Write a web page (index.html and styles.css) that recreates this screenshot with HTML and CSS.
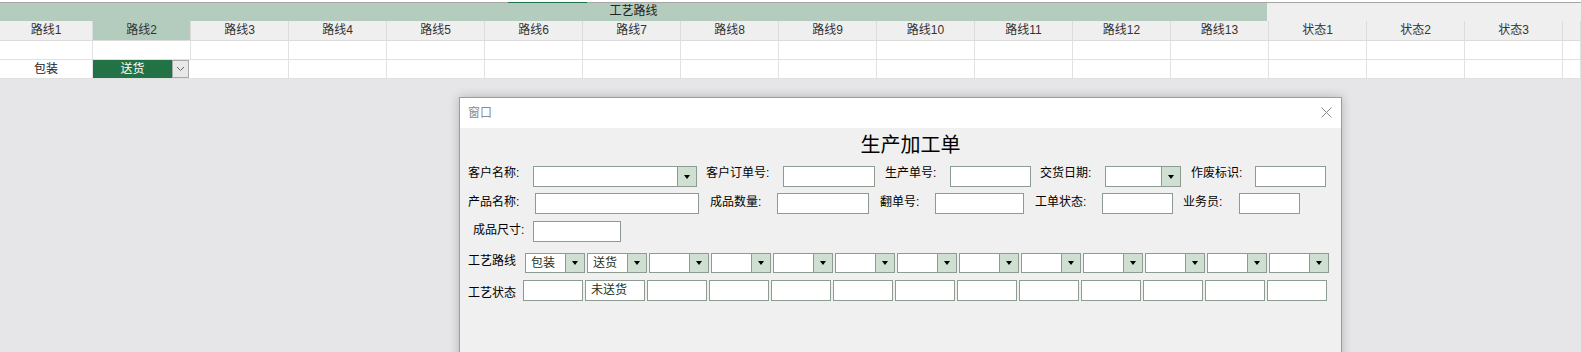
FILE: index.html
```html
<!DOCTYPE html>
<html lang="zh-CN">
<head>
  <meta charset="UTF-8" />
  <meta name="viewport" content="width=device-width, initial-scale=1.0" />
  <title>生产加工单</title>
  <link rel="stylesheet" href="styles.css">
</head>
<body>
  <!-- 表格区域 -->
  <div class="sheet">
    <div class="tabline"><span class="tab"></span></div>
    <div class="band-row">
      <div class="band">工艺路线</div>
      <div class="band-rest"></div>
    </div>
    <div class="grid head">
      <div class="cell">路线1</div>
      <div class="cell sel">路线2</div>
      <div class="cell">路线3</div>
      <div class="cell">路线4</div>
      <div class="cell">路线5</div>
      <div class="cell">路线6</div>
      <div class="cell">路线7</div>
      <div class="cell">路线8</div>
      <div class="cell">路线9</div>
      <div class="cell">路线10</div>
      <div class="cell">路线11</div>
      <div class="cell">路线12</div>
      <div class="cell">路线13</div>
      <div class="cell">状态1</div>
      <div class="cell">状态2</div>
      <div class="cell">状态3</div>
      <div class="cell"></div>
    </div>
    <div class="grid">
      <div class="cell"></div><div class="cell"></div><div class="cell"></div><div class="cell"></div>
      <div class="cell"></div><div class="cell"></div><div class="cell"></div><div class="cell"></div>
      <div class="cell"></div><div class="cell"></div><div class="cell"></div><div class="cell"></div>
      <div class="cell"></div><div class="cell"></div><div class="cell"></div><div class="cell"></div>
      <div class="cell"></div>
    </div>
    <div class="grid">
      <div class="cell">包装</div>
      <div class="cell pick">
        <span class="pick-val">送货</span>
        <span class="pick-btn">
          <svg width="9" height="6" viewBox="0 0 9 6"><path d="M1 1 L4.5 4.5 L8 1" fill="none" stroke="#666" stroke-width="1"/></svg>
        </span>
      </div>
      <div class="cell"></div><div class="cell"></div>
      <div class="cell"></div><div class="cell"></div><div class="cell"></div><div class="cell"></div>
      <div class="cell"></div><div class="cell"></div><div class="cell"></div><div class="cell"></div>
      <div class="cell"></div><div class="cell"></div><div class="cell"></div><div class="cell"></div>
      <div class="cell"></div>
    </div>
  </div>

  <!-- 弹出窗口 -->
  <div class="win">
    <div class="win-bar">
      <span class="win-title">窗口</span>
      <svg class="win-close" width="11" height="11" viewBox="0 0 11 11"><path d="M0.5 0.5 L10.5 10.5 M10.5 0.5 L0.5 10.5" stroke="#8a8a8a" stroke-width="1"/></svg>
    </div>
    <div class="win-body">
      <div class="form-title">生产加工单</div>

      <div class="row r1">
        <span class="lbl l-cust">客户名称:</span>
        <div class="combo c-cust"><span class="val"></span><span class="btn"><i class="tri"></i></span></div>
        <span class="lbl l-order">客户订单号:</span>
        <div class="box b-order"></div>
        <span class="lbl l-prod">生产单号:</span>
        <div class="box b-prod"></div>
        <span class="lbl l-date">交货日期:</span>
        <div class="combo c-date"><span class="val"></span><span class="btn"><i class="tri"></i></span></div>
        <span class="lbl l-void">作废标识:</span>
        <div class="box b-void"></div>
      </div>

      <div class="row r2">
        <span class="lbl l-name">产品名称:</span>
        <div class="box b-name"></div>
        <span class="lbl l-qty">成品数量:</span>
        <div class="box b-qty"></div>
        <span class="lbl l-re">翻单号:</span>
        <div class="box b-re"></div>
        <span class="lbl l-state">工单状态:</span>
        <div class="box b-state"></div>
        <span class="lbl l-sales">业务员:</span>
        <div class="box b-sales"></div>
      </div>

      <div class="row r3">
        <span class="lbl l-size">成品尺寸:</span>
        <div class="box b-size"></div>
      </div>

      <div class="row r4">
        <span class="lbl l-route">工艺路线</span>
        <div class="steps">
          <div class="combo step"><span class="val">包装</span><span class="btn"><i class="tri"></i></span></div>
          <div class="combo step"><span class="val">送货</span><span class="btn"><i class="tri"></i></span></div>
          <div class="combo step"><span class="val"></span><span class="btn"><i class="tri"></i></span></div>
          <div class="combo step"><span class="val"></span><span class="btn"><i class="tri"></i></span></div>
          <div class="combo step"><span class="val"></span><span class="btn"><i class="tri"></i></span></div>
          <div class="combo step"><span class="val"></span><span class="btn"><i class="tri"></i></span></div>
          <div class="combo step"><span class="val"></span><span class="btn"><i class="tri"></i></span></div>
          <div class="combo step"><span class="val"></span><span class="btn"><i class="tri"></i></span></div>
          <div class="combo step"><span class="val"></span><span class="btn"><i class="tri"></i></span></div>
          <div class="combo step"><span class="val"></span><span class="btn"><i class="tri"></i></span></div>
          <div class="combo step"><span class="val"></span><span class="btn"><i class="tri"></i></span></div>
          <div class="combo step"><span class="val"></span><span class="btn"><i class="tri"></i></span></div>
          <div class="combo step"><span class="val"></span><span class="btn"><i class="tri"></i></span></div>
        </div>
      </div>

      <div class="row r5">
        <span class="lbl l-status">工艺状态</span>
        <div class="steps">
          <div class="box stat"></div>
          <div class="box stat">未送货</div>
          <div class="box stat"></div>
          <div class="box stat"></div>
          <div class="box stat"></div>
          <div class="box stat"></div>
          <div class="box stat"></div>
          <div class="box stat"></div>
          <div class="box stat"></div>
          <div class="box stat"></div>
          <div class="box stat"></div>
          <div class="box stat"></div>
          <div class="box stat"></div>
        </div>
      </div>
    </div>
  </div>
</body>
</html>
```

FILE: styles.css
```css
:root {
  --page: #e6e6e8;
  --head: #efefef;
  --band: #b4ccbe;
  --green: #217346;
  --line: #e1e1e1;
  --field: #8d9c90;
  --btn: #cfdfd2;
  --panel: #f0f0f0;
}

* {
  box-sizing: border-box;
}

body {
  margin: 0;
  background: var(--page);
  font-family: "Liberation Sans", "Noto Sans CJK SC", sans-serif;
  font-size: 12px;
  color: #000;
  width: 1581px;
  height: 352px;
  overflow: hidden;
  position: relative;
}

/* spreadsheet */
.sheet {
  background: #fff;
}

.tabline {
  height: 3px;
  border-bottom: 1px solid #a6a6a6;
  display: flex;
}
.tabline .tab {
  margin-left: 508px;
  width: 79px;
  height: 3px;
  background: #fff;
  border-bottom: 1px solid var(--green);
}

.band-row {
  display: flex;
  height: 18px;
}
.band {
  width: 1267px;
  background: var(--band);
  text-align: center;
  line-height: 17px;
  color: #222;
}
.band-rest {
  flex: 1;
  background: var(--head);
}

.grid {
  display: grid;
  grid-template-columns: 93px repeat(15, 98px) 1fr;
  height: 19px;
}
.grid.head {
  height: 20px;
  background: var(--head);
}

.cell {
  border-right: 1px solid var(--line);
  border-bottom: 1px solid var(--line);
  text-align: center;
  line-height: 18px;
  color: #222;
  overflow: hidden;
}
.head .cell {
  border-color: #dcdcdc;
  line-height: 19px;
  color: #333;
}
.head .cell.sel {
  background: var(--band);
}

.cell.pick {
  display: flex;
  border-right: none;
}
.pick-val {
  width: 79px;
  background: var(--green);
  color: #fff;
  line-height: 18px;
}
.pick-btn {
  width: 17px;
  height: 18px;
  background: #e8e8e8;
  border: 1px solid #a9a9a9;
  display: flex;
  align-items: center;
  justify-content: center;
}

/* window */
.win {
  position: absolute;
  left: 459px;
  top: 97px;
  width: 883px;
  height: 270px;
  border: 1px solid #9c9c9c;
  background: var(--panel);
  box-shadow: 0 0 10px rgba(0, 0, 0, 0.22);
}

.win-bar {
  height: 30px;
  background: #fff;
  display: flex;
  align-items: center;
  justify-content: space-between;
  padding: 0 9px 0 8px;
}
.win-title {
  color: #8c8c8c;
  line-height: 14px;
}
.win-close {
  display: block;
  margin-top: -1px;
}

.win-body {
  padding-top: 5px;
}

.form-title {
  text-align: center;
  padding-left: 20px;
  font-size: 20px;
  line-height: 24px;
  color: #000;
}

.row {
  display: flex;
  align-items: flex-start;
}
.r1 { margin-top: 9px; }
.r2 { margin-top: 6px; }
.r3 { margin-top: 7px; }
.r4 { margin-top: 11px; }
.r5 { margin-top: 7px; }

.lbl {
  line-height: 14px;
  white-space: nowrap;
}

.box,
.combo {
  height: 21px;
  border: 1px solid var(--field);
  background: #fff;
}

.combo {
  display: flex;
}
.combo .val {
  flex: 1;
  padding-left: 5px;
  line-height: 18px;
  color: #1f2f22;
}
.combo .btn {
  width: 19px;
  border-left: 1px solid var(--field);
  background: var(--btn);
  display: flex;
  align-items: center;
  justify-content: center;
}
.tri {
  width: 0;
  height: 0;
  border-left: 3px solid transparent;
  border-right: 3px solid transparent;
  border-top: 4px solid #000;
}

/* row 1 */
.l-cust  { margin-left: 8px;  width: 65px; }
.c-cust  { width: 164px; }
.l-order { margin-left: 9px;  width: 77px; }
.b-order { width: 92px; }
.l-prod  { margin-left: 10px; width: 65px; }
.b-prod  { width: 81px; }
.l-date  { margin-left: 9px;  width: 65px; }
.c-date  { width: 76px; }
.l-void  { margin-left: 10px; width: 64px; }
.b-void  { width: 71px; }

/* row 2 */
.r2 .lbl { margin-top: 2px; }
.l-name  { margin-left: 8px;  width: 67px; }
.b-name  { width: 164px; }
.l-qty   { margin-left: 11px; width: 67px; }
.b-qty   { width: 92px; }
.l-re    { margin-left: 11px; width: 55px; }
.b-re    { width: 89px; }
.l-state { margin-left: 11px; width: 67px; }
.b-state { width: 71px; }
.l-sales { margin-left: 10px; width: 56px; }
.b-sales { width: 61px; }

/* row 3 */
.r3 .lbl { margin-top: 2px; }
.l-size  { margin-left: 13px; width: 60px; }
.b-size  { width: 88px; }

/* route + status */
.l-route  { margin-left: 8px; width: 57px; margin-top: 1px; }
.l-status { margin-left: 8px; width: 55px; margin-top: 6px; }

.steps {
  display: flex;
  gap: 2px;
}
.combo.step {
  width: 60px;
  height: 20px;
}
.box.stat {
  width: 60px;
  padding-left: 5px;
  line-height: 19px;
  color: #1f2f22;
}
```
